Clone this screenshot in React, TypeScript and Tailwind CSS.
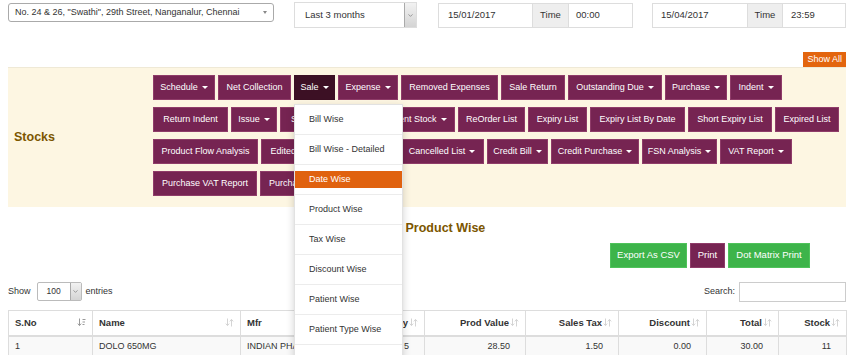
import { ChevronDown } from 'lucide-react';

type Btn = { label: string; w: string; caret?: boolean; active?: boolean; menu?: boolean };

const rows: Btn[][] = [
  [
    { label: 'Schedule', w: 'w-[62px]', caret: true },
    { label: 'Net Collection', w: 'w-[73px]' },
    { label: 'Sale', w: 'w-[41px]', caret: true, active: true, menu: true },
    { label: 'Expense', w: 'w-[60px]', caret: true },
    { label: 'Removed Expenses', w: 'w-[97px]' },
    { label: 'Sale Return', w: 'w-[64px]' },
    { label: 'Outstanding Due', w: 'w-[94px]', caret: true },
    { label: 'Purchase', w: 'w-[62px]', caret: true },
    { label: 'Indent', w: 'w-[52px]', caret: true },
  ],
  [
    { label: 'Return Indent', w: 'w-[75px]' },
    { label: 'Issue', w: 'w-[46px]', caret: true },
    { label: 'Stock Transfer', w: 'w-[90px]', caret: true },
    { label: 'Current Stock', w: 'w-[82px]', caret: true },
    { label: 'ReOrder List', w: 'w-[67px]' },
    { label: 'Expiry List', w: 'w-[59px]' },
    { label: 'Expiry List By Date', w: 'w-[95px]' },
    { label: 'Short Expiry List', w: 'w-[84px]' },
    { label: 'Expired List', w: 'w-[64px]' },
  ],
  [
    { label: 'Product Flow Analysis', w: 'w-[105px]' },
    { label: 'Edited Bill', w: 'w-[69px]', caret: true },
    { label: 'Deleted Bill', w: 'w-[64px]', caret: true },
    { label: 'Cancelled List', w: 'w-[84px]', caret: true },
    { label: 'Credit Bill', w: 'w-[61px]', caret: true },
    { label: 'Credit Purchase', w: 'w-[88px]', caret: true },
    { label: 'FSN Analysis', w: 'w-[75px]', caret: true },
    { label: 'VAT Report', w: 'w-[72px]', caret: true },
  ],
  [
    { label: 'Purchase VAT Report', w: 'w-[104px]' },
    { label: 'Purchase Tax Report', w: 'w-[102px]' },
  ],
];

const saleMenu = [
  'Bill Wise',
  'Bill Wise - Detailed',
  'Date Wise',
  'Product Wise',
  'Tax Wise',
  'Discount Wise',
  'Patient Wise',
  'Patient Type Wise',
  'Payment Type Wise',
];

const cols = [
  { label: 'S.No', w: 'w-[84px]', align: 'left', active: true },
  { label: 'Name', w: 'w-[148px]', align: 'left' },
  { label: 'Mfr', w: 'w-[110px]', align: 'left' },
  { label: 'Qty', w: 'w-[74px]', align: 'right' },
  { label: 'Prod Value', w: 'w-[101px]', align: 'right' },
  { label: 'Sales Tax', w: 'w-[93px]', align: 'right' },
  { label: 'Discount', w: 'w-[88px]', align: 'right' },
  { label: 'Total', w: 'w-[72px]', align: 'right' },
  { label: 'Stock', w: 'w-[68px]', align: 'right' },
];

const firstRow = ['1', 'DOLO 650MG', 'INDIAN PHARMA', '5', '28.50', '1.50', '0.00', '30.00', '11'];

function Caret() {
  return (
    <span className="inline-block ml-[4px] w-0 h-0 align-middle border-l-[3px] border-r-[3px] border-t-[3px] border-l-transparent border-r-transparent border-t-white" />
  );
}

function SortIcon({ active }: { active?: boolean }) {
  const down = active ? '#9a9a9a' : '#d4d4d4';
  return (
    <svg className="inline-block w-[9px] h-[9px] ml-[1px] align-[-1px]" viewBox="0 0 9 9" fill="none">
      <path d="M2.5 0.5v7M0.8 5.6l1.7 2 1.7-2" stroke={down} strokeWidth="1" />
      {active ? (
        <path d="M5.5 1.5h3M5.5 4h2.5M5.5 6.5h2" stroke="#9a9a9a" strokeWidth="1" />
      ) : (
        <path d="M6.5 8.5v-7M4.8 3.4l1.7-2 1.7 2" stroke="#d4d4d4" strokeWidth="1" />
      )}
    </svg>
  );
}

function MenuButton({ b }: { b: Btn }) {
  const base = `${b.w} h-[25px] flex items-center justify-center text-white text-[9px] whitespace-nowrap overflow-hidden border`;
  const color = b.active ? 'bg-[#3c1024] border-[#3c1024]' : 'bg-[#762452] border-[#8f3c69]';
  if (!b.menu) {
    return (
      <div className={`${base} ${color}`}>
        {b.label}
        {b.caret && <Caret />}
      </div>
    );
  }
  return (
    <div className="relative">
      <div className={`${base} ${color}`}>
        {b.label}
        {b.caret && <Caret />}
      </div>
      <div className="absolute left-0 top-[29px] z-20 w-[109px] bg-white border border-[#e2e2e2] shadow-[0_3px_8px_rgba(0,0,0,0.18)] pt-[6px]">
        {saleMenu.map((m, i) => (
          <div key={m}>
            {i > 0 && <div className="h-px my-[6px] bg-[#ececec]" />}
            <div
              className={`h-[17px] leading-[17px] pl-[14px] text-[9px] whitespace-nowrap ${
                m === 'Date Wise' ? 'bg-[#e0620f] text-white' : 'text-[#333]'
              }`}
            >
              {m}
            </div>
          </div>
        ))}
      </div>
    </div>
  );
}

export default function App() {
  return (
    <div className="w-[850px] h-[355px] overflow-hidden bg-white font-['Liberation_Sans',Arial,sans-serif] text-[#333]">
      {/* Filters */}
      <div className="flex items-start pt-[2px] pl-[8px]">
        <div className="mt-[1px] w-[266px] h-[19px] border border-[#aaa] rounded-[3px] flex items-center pl-[6px] pr-[6px] text-[9px]">
          <span className="flex-1 whitespace-nowrap">No. 24 &amp; 26, "Swathi", 29th Street, Nanganalur, Chennai</span>
          <span className="w-0 h-0 border-l-[2.5px] border-r-[2.5px] border-t-[3px] border-l-transparent border-r-transparent border-t-[#888]" />
        </div>
        <div className="ml-[20px] w-[123px] h-[26px] border border-[#ddd] flex items-stretch text-[9.5px]">
          <span className="flex-1 flex items-center pl-[10px]">Last 3 months</span>
          <span className="w-[12px] bg-gradient-to-b from-[#f2f2f2] to-[#d4d4d4] border-l border-[#aaa] flex items-center justify-center">
            <ChevronDown className="w-[7px] h-[7px] text-[#666]" strokeWidth={2} />
          </span>
        </div>
        <div className="ml-[21px] mt-[1px] h-[25px] flex text-[9.5px] border border-[#ddd]">
          <div className="w-[93px] flex items-center pl-[9px]">15/01/2017</div>
          <div className="w-[37px] flex items-center justify-center bg-[#eee] border-l border-r border-[#ddd]">Time</div>
          <div className="w-[63px] flex items-center pl-[7px]">00:00</div>
        </div>
        <div className="ml-[19px] mt-[1px] h-[25px] flex text-[9.5px] border border-[#ddd]">
          <div className="w-[94px] flex items-center pl-[8px]">15/04/2017</div>
          <div className="w-[36px] flex items-center justify-center bg-[#eee] border-l border-r border-[#ddd]">Time</div>
          <div className="w-[62px] flex items-center pl-[8px]">23:59</div>
        </div>
      </div>

      <div className="px-[4px_4px] pl-[8px] pr-[4px]">
        {/* Show all */}
        <div className="mt-[24px] flex justify-end">
          <div className="h-[15px] px-[4px] bg-[#e3650e] text-white text-[9px] flex items-center">Show All</div>
        </div>

        {/* Stocks panel */}
        <div className="h-[140px] bg-[#fdf6e2] border-t border-[#efe9d6] flex">
          <div className="w-[145px] flex items-center pl-[6px] pb-[1px]">
            <span className="font-bold text-[12.5px] text-[#7c5600]">Stocks</span>
          </div>
          <div className="pt-[7px] flex flex-col gap-[7px]">
            {rows.map((r, i) => (
              <div key={i} className="flex gap-[3px]">
                {r.map((b) => (
                  <MenuButton key={b.label} b={b} />
                ))}
              </div>
            ))}
          </div>
        </div>

        {/* Title */}
        <div className="mt-[13px] text-center leading-[16px] font-bold text-[12.5px] text-[#7c5600]">
          Sale - Product Wise
        </div>

        {/* Actions */}
        <div className="mt-[7px] flex justify-end gap-[3px] pr-[36px] text-[9.5px] text-white">
          <div className="w-[77px] h-[25px] flex items-center justify-center bg-[#3db44a] border border-[#4fc35b]">Export As CSV</div>
          <div className="w-[35px] h-[25px] flex items-center justify-center bg-[#762452] border border-[#8f3c69]">Print</div>
          <div className="w-[82px] h-[25px] flex items-center justify-center bg-[#3db44a] border border-[#4fc35b]">Dot Matrix Print</div>
        </div>

        {/* Show entries / search */}
        <div className="mt-[14px] h-[19px] flex items-center text-[9px]">
          <span>Show</span>
          <div className="ml-[6px] w-[45px] h-[19px] border border-[#bbb] rounded-[2px] flex items-stretch text-[8.5px]">
            <span className="flex-1 flex items-center pl-[9px]">100</span>
            <span className="w-[11px] bg-gradient-to-b from-[#f2f2f2] to-[#d4d4d4] border-l border-[#aaa] flex items-center justify-center">
              <ChevronDown className="w-[7px] h-[7px] text-[#666]" strokeWidth={2} />
            </span>
          </div>
          <span className="ml-[4px]">entries</span>
          <span className="ml-auto mr-[4px]">Search:</span>
          <div className="w-[107px] h-[20px] border border-[#ccc]" />
        </div>

        {/* Table */}
        <table className="mt-[9px] w-[838px] table-fixed border-collapse text-[9px]">
          <thead>
            <tr className="h-[25px]">
              {cols.map((c) => (
                <th
                  key={c.label}
                  className={`${c.w} border border-[#ddd] border-b-2 font-bold text-[9.5px] text-[#333] px-[6px] ${
                    c.align === 'right' ? 'text-right' : 'text-left'
                  }`}
                >
                  {c.align === 'left' ? (
                    <div className="flex items-center justify-between">
                      <span>{c.label}</span>
                      <SortIcon active={c.active} />
                    </div>
                  ) : (
                    <span className="whitespace-nowrap">
                      {c.label}
                      <SortIcon />
                    </span>
                  )}
                </th>
              ))}
            </tr>
          </thead>
          <tbody>
            <tr className="h-[22px] bg-[#f9f9f9]">
              {firstRow.map((v, i) => (
                <td
                  key={i}
                  className={`border border-[#ddd] whitespace-nowrap overflow-hidden ${
                    cols[i].align === 'right' ? 'text-right pr-[15px]' : 'text-left pl-[6px]'
                  }`}
                >
                  {v}
                </td>
              ))}
            </tr>
          </tbody>
        </table>
      </div>
    </div>
  );
}
